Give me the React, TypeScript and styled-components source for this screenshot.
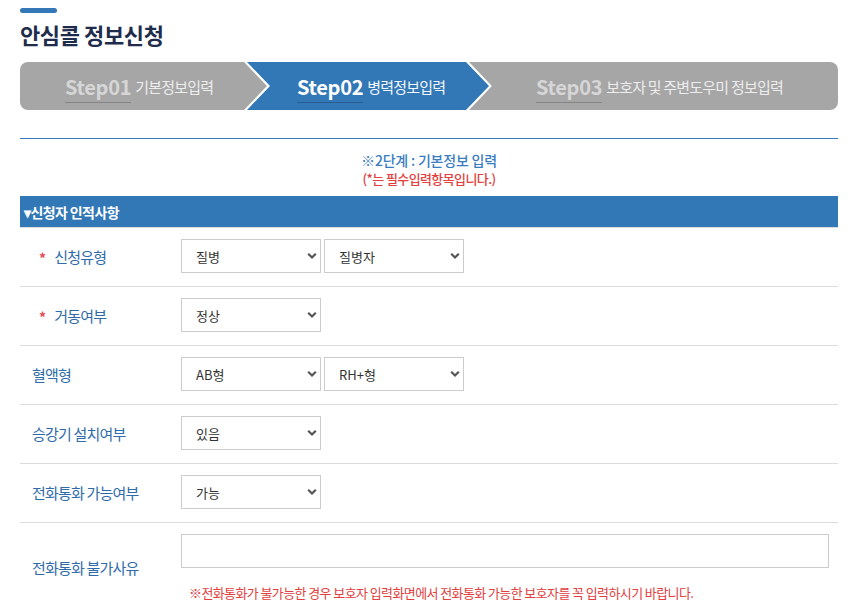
import { styled, createGlobalStyle, css } from "styled-components";

const GlobalStyle = createGlobalStyle`
  html, body {
    margin: 0;
    padding: 0;
    background: #fff;
  }
  * {
    box-sizing: border-box;
  }
`;

type Step = { no: string; label: string; width?: number };

const steps: Step[] = [
  { no: "Step01", label: "기본정보입력", width: 225 },
  { no: "Step02", label: "병력정보입력", width: 222 },
  { no: "Step03", label: "보호자 및 주변도우미 정보입력" },
];

const ACTIVE = 1;

function Arrow() {
  return (
    <svg width="10" height="7" viewBox="0 0 10 7">
      <path d="M1.2 1.2 L5 5 L8.8 1.2" fill="none" stroke="#555" strokeWidth="2.2" />
    </svg>
  );
}

function SelectBox({ value, options }: { value: string; options: string[] }) {
  return (
    <SelectWrap>
      <Select defaultValue={value}>
        {options.map((o) => (
          <option key={o}>{o}</option>
        ))}
      </Select>
      <ArrowIcon>
        <Arrow />
      </ArrowIcon>
    </SelectWrap>
  );
}

function Label({ text, required }: { text: string; required?: boolean }) {
  return (
    <RowLabel $required={required}>
      {required && <Star>*</Star>}
      {text}
    </RowLabel>
  );
}

function App() {
  return (
    <Page>
      <GlobalStyle />
      <AccentBar />
      <Title>안심콜 정보신청</Title>

      <StepBar>
        {steps.map((s, i) => (
          <StepItem
            key={s.no}
            $width={s.width}
            $active={i === ACTIVE}
            $last={i === steps.length - 1}
            $pad={i === 0 ? 45 : i === 1 ? 52 : 69}
          >
            <StepNo $active={i === ACTIVE}>{s.no}</StepNo>
            <StepLabel $active={i === ACTIVE}>{s.label}</StepLabel>
          </StepItem>
        ))}
      </StepBar>

      <Divider />

      <Guide>
        <GuideTitle>※2단계 : 기본정보 입력</GuideTitle>
        <GuideNote>(*는 필수입력항목입니다.)</GuideNote>
      </Guide>

      <SectionHead>▾신청자 인적사항</SectionHead>

      <Row>
        <Label text="신청유형" required />
        <Controls>
          <SelectBox value="질병" options={["질병", "장애", "고령"]} />
          <SelectBox value="질병자" options={["질병자", "환자"]} />
        </Controls>
      </Row>
      <Row>
        <Label text="거동여부" required />
        <Controls>
          <SelectBox value="정상" options={["정상", "불편"]} />
        </Controls>
      </Row>
      <Row>
        <Label text="혈액형" />
        <Controls>
          <SelectBox value="AB형" options={["A형", "B형", "O형", "AB형"]} />
          <SelectBox value="RH+형" options={["RH+형", "RH-형"]} />
        </Controls>
      </Row>
      <Row>
        <Label text="승강기 설치여부" />
        <Controls>
          <SelectBox value="있음" options={["있음", "없음"]} />
        </Controls>
      </Row>
      <Row>
        <Label text="전화통화 가능여부" />
        <Controls>
          <SelectBox value="가능" options={["가능", "불가능"]} />
        </Controls>
      </Row>
      <Row $tall>
        <Label text="전화통화 불가사유" />
        <Stack>
          <TextInput type="text" />
          <Warn>
            ※전화통화가 불가능한 경우 보호자 입력화면에서 전화통화 가능한 보호자를 꼭 입력하시기 바랍니다.
          </Warn>
        </Stack>
      </Row>
    </Page>
  );
}

const Page = styled.div`
  width: 838px;
  padding: 8px 0 0 20px;
  font-family: "Noto Sans CJK KR", "Noto Sans", sans-serif;
`;

const AccentBar = styled.div`
  width: 37px;
  height: 5px;
  border-radius: 3px;
  background: #3478b8;
`;

const Title = styled.h1`
  margin: 5px 0 0;
  font-size: 22px;
  line-height: 32px;
  font-weight: 700;
  color: #1f2c4c;
  letter-spacing: -0.4px;
`;

const StepBar = styled.div`
  position: relative;
  z-index: 0;
  display: flex;
  height: 48px;
  margin-top: 12px;
  background: #a6a6a6;
  border-radius: 8px;
  overflow: hidden;
`;

const StepItem = styled.div<{
  $width?: number;
  $active?: boolean;
  $last?: boolean;
  $pad: number;
}>`
  position: relative;
  display: flex;
  align-items: center;
  flex: ${(p) => (p.$width ? `0 0 ${p.$width}px` : "1")};
  padding-left: ${(p) => p.$pad}px;

  ${(p) =>
    p.$active &&
    css`
      &::before {
        content: "";
        position: absolute;
        top: 0;
        bottom: 0;
        left: 0;
        right: -25px;
        background: #3278b6;
        z-index: -1;
        clip-path: polygon(0 0, calc(100% - 25px) 0, 100% 50%, calc(100% - 25px) 100%, 0 100%, 23px 50%);
      }
    `}

  ${(p) =>
    !p.$last &&
    css`
      &::after {
        content: "";
        position: absolute;
        top: 0;
        bottom: 0;
        left: calc(100% - 1px);
        width: 26px;
        background: #fff;
        z-index: 2;
        clip-path: polygon(0 0, 3px 0, 100% 50%, 3px 100%, 0 100%, calc(100% - 3px) 50%);
      }
    `}
`;

const StepNo = styled.span<{ $active?: boolean }>`
  position: relative;
  z-index: 1;
  padding: 2px 0 3px;
  margin-top: 4px;
  font-size: 20px;
  line-height: 24px;
  font-weight: 700;
  letter-spacing: -0.3px;
  color: ${(p) => (p.$active ? "#ffffff" : "#d6d6d6")};
  border-bottom: 1px solid ${(p) => (p.$active ? "#285d8e" : "#858585")};
`;

const StepLabel = styled.span<{ $active?: boolean }>`
  position: relative;
  z-index: 1;
  margin-left: 4px;
  font-size: 15px;
  letter-spacing: -0.8px;
  color: ${(p) => (p.$active ? "#f2f6fb" : "#ededed")};
`;

const Divider = styled.div`
  height: 1px;
  margin-top: 28px;
  background: #3a7bbf;
`;

const Guide = styled.div`
  display: flex;
  flex-direction: column;
  align-items: center;
  padding: 11px 0 8px;
`;

const GuideTitle = styled.div`
  font-size: 14px;
  line-height: 20px;
  font-weight: 500;
  color: #3a7cc2;
  letter-spacing: -0.2px;
`;

const GuideNote = styled.div`
  font-size: 13px;
  line-height: 18px;
  font-weight: 500;
  color: #e2403f;
  letter-spacing: -0.6px;
`;

const SectionHead = styled.div`
  height: 31px;
  padding-left: 4px;
  display: flex;
  align-items: center;
  background: #3278b6;
  color: #fff;
  font-size: 14px;
  font-weight: 700;
  letter-spacing: -0.6px;
  border-bottom: 1px solid #dcdcdc;
  box-sizing: content-box;
`;

const Row = styled.div<{ $tall?: boolean }>`
  display: grid;
  grid-template-columns: 161px 1fr;
  align-items: center;
  padding: ${(p) => (p.$tall ? "11px 0 12px" : "11px 0 13px")};
  border-bottom: 1px solid #dcdcdc;
`;

const RowLabel = styled.div<{ $required?: boolean }>`
  display: flex;
  align-items: center;
  padding-left: ${(p) => (p.$required ? "19px" : "12px")};
  font-size: 15px;
  color: #2f6ba8;
  letter-spacing: -0.8px;
`;

const Star = styled.span`
  margin-right: 9px;
  font-size: 14px;
  font-weight: 700;
  color: #e04b55;
  position: relative;
  top: 2px;
`;

const Controls = styled.div`
  display: flex;
  gap: 3px;
`;

const SelectWrap = styled.div`
  position: relative;
  width: 140px;
  height: 34px;
`;

const Select = styled.select`
  appearance: none;
  width: 100%;
  height: 100%;
  padding: 0 14px;
  border: 1px solid #cccccc;
  border-radius: 0;
  background: #fff;
  font-family: inherit;
  font-size: 13px;
  color: #333;
  outline: none;
`;

const ArrowIcon = styled.span`
  position: absolute;
  right: 4px;
  top: 50%;
  display: flex;
  transform: translateY(-50%);
  pointer-events: none;
`;

const Stack = styled.div`
  display: flex;
  flex-direction: column;
`;

const TextInput = styled.input`
  width: 648px;
  height: 34px;
  border: 1px solid #cccccc;
  outline: none;
  font-family: inherit;
`;

const Warn = styled.div`
  margin-top: 18px;
  padding-left: 8px;
  font-size: 13px;
  line-height: 14px;
  color: #e2403f;
  letter-spacing: -0.6px;
`;

export default App;
